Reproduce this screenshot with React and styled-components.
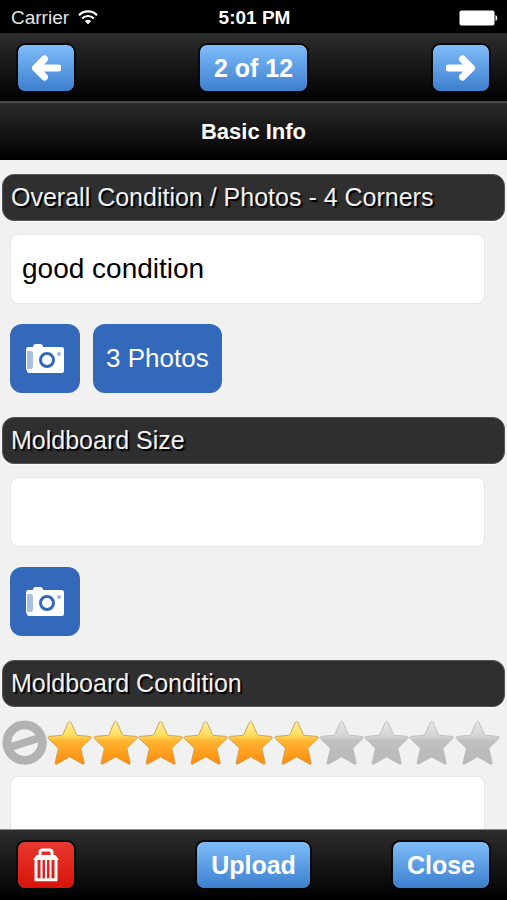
import React, { useState } from "react";
import styled, { createGlobalStyle } from "styled-components";

const App = () => {
  const [rating, setRating] = useState(6);

  return (
    <Screen>
      <GlobalStyle />
      <StatusBar>
        <Carrier>
          Carrier
          <WifiIcon />
        </Carrier>
        <Clock>5:01 PM</Clock>
        <Battery>
          <BatteryIcon />
        </Battery>
      </StatusBar>
      <Toolbar>
        <BarButton $icon aria-label="Previous">
          <ArrowIcon d="M27 13H6M13.500 4L4.500 13l9 9" />
        </BarButton>
        <BarButton>2 of 12</BarButton>
        <BarButton $icon aria-label="Next">
          <ArrowIcon d="M3 13H24M16.500 4l9 9-9 9" />
        </BarButton>
      </Toolbar>
      <TitleBar>Basic Info</TitleBar>

      <Content>
        <Heading htmlFor="overall">Overall Condition / Photos - 4 Corners</Heading>
        <Field id="overall" defaultValue="good condition" />
        <Actions>
          <PhotoButton $square aria-label="Take photo">
            <CameraIcon />
          </PhotoButton>
          <PhotoButton>3 Photos</PhotoButton>
        </Actions>

        <Heading htmlFor="size">Moldboard Size</Heading>
        <Field id="size" />
        <Actions>
          <PhotoButton $square aria-label="Take photo">
            <CameraIcon />
          </PhotoButton>
        </Actions>

        <Heading htmlFor="condition">Moldboard Condition</Heading>
        <Rating role="group" aria-label="Rating">
          <ClearButton aria-label="Clear rating" onClick={() => setRating(0)}>
            <BanIcon />
          </ClearButton>
          {[1, 2, 3, 4, 5, 6, 7, 8, 9, 10].map((n) => (
            <StarLabel key={n}>
              <StarInput
                type="radio"
                name="rating"
                aria-label={`${n} stars`}
                checked={rating === n}
                onChange={() => setRating(n)}
              />
              <StarIcon on={n <= rating} />
            </StarLabel>
          ))}
        </Rating>
        <Field id="condition" />
      </Content>

      <Footer>
        <BarButton $icon $danger aria-label="Delete">
          <TrashIcon />
        </BarButton>
        <BarButton>Upload</BarButton>
        <BarButton>Close</BarButton>
      </Footer>
      <Gradients />
    </Screen>
  );
};

const WifiIcon = () => (
  <svg width="20" height="15" viewBox="0 0 20 15" fill="none" stroke="#fff" strokeWidth="2.2">
    <path d="M1 5.2C6 .2 14 .2 19 5.2" />
    <path d="M4.2 8.4c3.2-3.2 8.4-3.2 11.6 0" />
    <path d="M6.8 10.9L10 14.3l3.2-3.4c-1.8-1.7-4.6-1.7-6.4 0z" fill="#fff" stroke="none" />
  </svg>
);

const BatteryIcon = () => (
  <svg width="39" height="16" viewBox="0 0 39 16" fill="#fff">
    <rect x="0.5" y="0.5" width="35" height="15" rx="2" />
    <path d="M36.5 5c2.4 1.4 2.4 4.6 0 6z" />
  </svg>
);

const ArrowIcon = ({ d }) => (
  <svg
    width="30"
    height="26"
    viewBox="0 0 30 26"
    fill="none"
    stroke="#fff"
    strokeWidth="7"
    strokeLinecap="round"
    strokeLinejoin="round"
  >
    <path d={d} />
  </svg>
);

const CameraIcon = () => (
  <svg width="38" height="30" viewBox="0 0 38 30">
    <path
      d="M2 3h5c0-2 1-3 3-3h4c2 0 3 1 3 3h19c1 0 2 1 2 2v22c0 1-1 2-2 2H3c-1 0-2-1-2-2l-1-2V6c0-2 1-3 2-3z"
      fill="#fff"
    />
    <path d="M1 7h4c1 0 2 1 2 3v12c0 2-1 3-2 3H1z" fill="#a9bfe3" />
    <circle cx="21" cy="16" r="6.5" fill="#fff" stroke="#3468bb" strokeWidth="3" />
    <circle cx="33" cy="10" r="2" fill="#9db6df" />
  </svg>
);

const BanIcon = () => (
  <svg viewBox="0 0 46 46" fill="none" stroke="#b2b2b2">
    <circle cx="23" cy="23" r="18" strokeWidth="9" />
    <path d="M9 27.500l28-9" strokeWidth="8" />
  </svg>
);

const StarIcon = ({ on }) => (
  <svg viewBox="0 0 46 46">
    <path
      d="M23 1.500c.7 0 1.200.5 1.500 1.200l5.200 11.800c.3.7.8 1 1.500 1.100l12.600 1.100c1.300.2 1.700 1.200.8 2.100l-9.500 9.200c-.5.5-.6 1.100-.5 1.700l3.100 13.700c.3 1.300-.5 1.900-1.700 1.300l-12-6.700c-.7-.4-1.300-.4-2 0l-12 6.700c-1.200.6-2 0-1.700-1.300l3.100-13.700c.1-.6 0-1.200-.5-1.700L1.400 18.800c-.9-.9-.5-1.900.8-2.100l12.600-1.100c.7-.1 1.200-.4 1.500-1.100l5.200-11.800c.3-.7.8-1.200 1.500-1.200z"
      fill={on ? "url(#gold)" : "url(#grey)"}
      stroke={on ? "#cfa14a" : "#bdbdbd"}
      strokeWidth="1"
    />
  </svg>
);

const TrashIcon = () => (
  <svg width="26" height="34" viewBox="0 0 26 34" fill="none" stroke="#fff">
    <path d="M7 8V4.500C7 3 8 2 9.500 2h7C18 2 19 3 19 4.500V8" strokeWidth="3" />
    <path d="M3.500 7h19L26 12H0z" fill="#fff" stroke="none" />
    <path d="M3 11v20.800h20V11" strokeWidth="3" />
    <path d="M8.500 12v18M13 12v18M17.500 12v18" strokeWidth="2" />
  </svg>
);

// fills shared by every star
const Gradients = () => (
  <Defs aria-hidden="true">
    <defs>
      <linearGradient id="gold" x1="0" y1="0" x2="0" y2="1">
        <stop offset="0" stopColor="#fff1a8" />
        <stop offset="0.32" stopColor="#ffdc5c" />
        <stop offset="0.46" stopColor="#ffb431" />
        <stop offset="1" stopColor="#ff8a0c" />
      </linearGradient>
      <linearGradient id="grey" x1="0" y1="0" x2="0" y2="1">
        <stop offset="0" stopColor="#e6e6e6" />
        <stop offset="0.36" stopColor="#d2d2d2" />
        <stop offset="0.45" stopColor="#c0c0c0" />
        <stop offset="1" stopColor="#b8b8b8" />
      </linearGradient>
    </defs>
  </Defs>
);

const GlobalStyle = createGlobalStyle`
  * {
    box-sizing: border-box;
  }
  body {
    margin: 0;
    background-color: #000;
  }
  body, button, textarea {
    font-family: "Liberation Sans", Arial, sans-serif;
  }
`;

const Screen = styled.div`
  display: flex;
  flex-direction: column;
  height: 100vh;
  background-color: #f1f1f1;
`;

const StatusBar = styled.div`
  display: grid;
  grid-template-columns: 1fr auto 1fr;
  align-items: center;
  height: 33px;
  padding: 2px 9px 0 11px;
  color: #fff;
  background-color: #000;
  font-size: 19px;
`;

const Carrier = styled.div`
  display: flex;
  align-items: center;
  gap: 9px;
  color: #e4e4e4;
`;

const Clock = styled.div`
  font-weight: bold;
`;

const Battery = styled.div`
  display: flex;
  justify-content: flex-end;
`;

const Bar = styled.div`
  display: grid;
  grid-template-columns: 1fr auto 1fr;
  align-items: center;
  padding: 11px 17px;
  background-image: linear-gradient(#2d2d2d, #000);
  & > :last-child {
    justify-self: end;
  }
`;

const Toolbar = styled(Bar).attrs({ as: "header" })`
  height: 68px;
`;

const Footer = styled(Bar).attrs({ as: "footer" })`
  height: 71px;
  border-top: 1px solid #8c8c8c;
`;

const BarButton = styled.button`
  display: flex;
  align-items: center;
  justify-content: center;
  justify-self: start;
  min-width: 58px;
  height: 48px;
  padding: 0 ${({ $icon }) => ($icon ? "0" : "14px")};
  border: 1px solid #05080c;
  border-radius: 8px;
  color: #fff;
  background-image: ${({ $danger }) =>
    $danger
      ? "linear-gradient(#e8382f, #d8130a)"
      : "linear-gradient(#7fbcfa, #3c7fcd)"};
  background-clip: padding-box;
  box-shadow: 0 0 0 1px rgba(0, 0, 0, 0.6);
  font-size: 25px;
  font-weight: bold;
  svg {
    flex: none;
  }
`;

const TitleBar = styled.h1`
  margin: 0;
  height: 59px;
  border-top: 2px solid #484848;
  color: #fff;
  background-image: linear-gradient(#2b2b2b, #000);
  font-size: 22px;
  line-height: 57px;
  text-align: center;
`;

const Content = styled.main`
  flex: 1;
  min-height: 0;
  padding-top: 14px;
  overflow-y: auto;
  scrollbar-width: none;
`;

const Heading = styled.label`
  display: block;
  margin: 0 2px 13px;
  padding: 0 8px;
  border: 1px solid #555;
  border-radius: 12px;
  color: #f2f2f2;
  background-color: #2f2f2f;
  box-shadow: 0 1px 2px #fff;
  font-size: 25px;
  line-height: 45px;
  text-shadow: 2px 2px 1px #000;
`;

const Field = styled.textarea`
  display: block;
  width: calc(100% - 32px);
  height: 70px;
  margin: 0 22px 20px 10px;
  padding: 18px 11px;
  border: 1px solid #e6e6e6;
  border-radius: 8px;
  color: #000;
  background-color: #fff;
  font-size: 28px;
  line-height: 32px;
  resize: none;
  overflow: hidden;
  outline: none;
`;

const Actions = styled.div`
  display: flex;
  gap: 13px;
  margin: 0 10px 24px;
`;

const PhotoButton = styled.button`
  display: flex;
  align-items: center;
  justify-content: center;
  width: ${({ $square }) => ($square ? "70px" : "auto")};
  height: 69px;
  padding: 0 13px;
  border: none;
  border-radius: 12px;
  color: #fff;
  background-color: #3468bb;
  font-size: 26px;
`;

const Rating = styled.div`
  display: grid;
  grid-template-columns: repeat(11, 1fr);
  margin: 0 7px 11px 2px;
  svg {
    display: block;
    width: 100%;
  }
`;

const ClearButton = styled.button`
  padding: 0;
  border: none;
  background: none;
`;

const StarLabel = styled.label`
  position: relative;
`;

const StarInput = styled.input`
  position: absolute;
  inset: 0;
  width: 100%;
  height: 100%;
  margin: 0;
  opacity: 0;
`;

const Defs = styled.svg`
  position: absolute;
  width: 0;
  height: 0;
`;

export default App;
